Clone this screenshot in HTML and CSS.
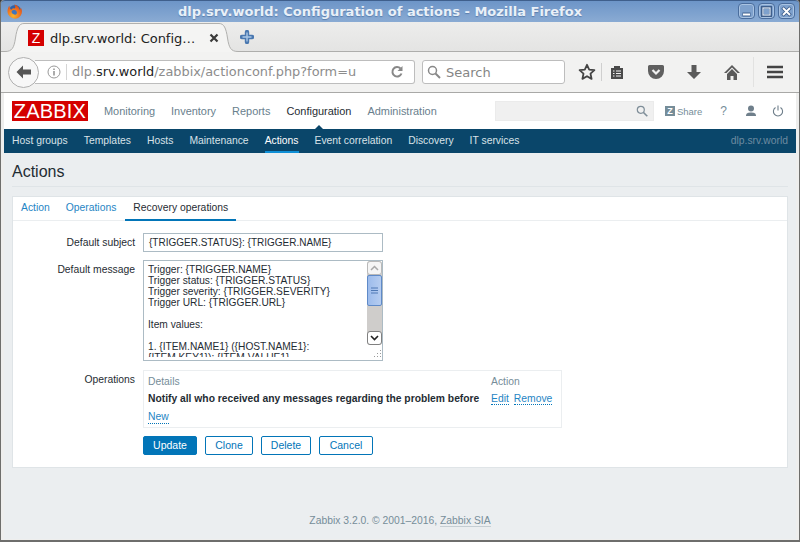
FILE: index.html
```html
<!DOCTYPE html>
<html lang="en">
<head>
    <meta charset="UTF-8">
    <title>dlp.srv.world: Configuration of actions</title>
    <link rel="stylesheet" href="styles.css">
</head>
<body>
<div class="window">
    <div class="titlebar">
        <svg class="ff-logo" width="15" height="15" viewBox="0 0 16 16">
            <defs>
                <radialGradient id="ffOrange" cx="0.4" cy="0.8" r="0.9">
                    <stop offset="0" stop-color="#f7b32b"/>
                    <stop offset="0.6" stop-color="#ec6a1f"/>
                    <stop offset="1" stop-color="#c9401c"/>
                </radialGradient>
            </defs>
            <circle cx="8.500" cy="7.500" r="6.500" fill="#2f62a8"/>
            <path d="M2.500 1.500C1 4 -.5 8 1.500 11.500C4 16 11 17.500 14.500 12.500C16.500 9.500 16.300 6 14.500 3.500C14.700 5 14.200 5.800 13.500 6C12.800 3 10.500 .8 7.500 .5C9 2 9.300 3.500 8.300 4.800C6.500 4.200 5.200 5 4.800 6.200C3.500 5.500 2.700 4 2.500 1.500Z" fill="url(#ffOrange)"/>
            <path d="M5 7.500C6 6 9 6 10.300 8C11.300 9.800 9.800 11.800 7.800 11.300C5.800 10.800 4.500 9.300 5 7.500Z" fill="#3f74bd"/>
        </svg>
        <span class="title-text">dlp.srv.world: Configuration of actions - Mozilla Firefox</span>
        <div class="win-buttons">
            <span class="win-btn"><svg width="13" height="13" viewBox="0 0 13 13"><path d="M2.500 9.500h8" stroke="#3f5f8c" stroke-width="4"/><path d="M3 9.500h7" stroke="#fff" stroke-width="2"/></svg></span>
            <span class="win-btn"><svg width="13" height="13" viewBox="0 0 13 13"><rect x="2.500" y="2.500" width="8" height="8" fill="none" stroke="#3f5f8c" stroke-width="3"/><rect x="3" y="3" width="7" height="7" fill="none" stroke="#dfe9f5" stroke-width="1.200"/></svg></span>
            <span class="win-btn"><svg width="13" height="13" viewBox="0 0 13 13"><path d="M2.500 2.500l8 8M10.500 2.500l-8 8" stroke="#3f5f8c" stroke-width="3.600"/><path d="M3 3l7 7M10 3l-7 7" stroke="#fff" stroke-width="1.800"/></svg></span>
        </div>
    </div>

    <div class="tabstrip">
        <div class="tab">
            <svg class="tab-flare" width="19" height="29" viewBox="0 0 19 29"><path d="M0 28.500C7 28.500 9 25 10.500 15C12 5 14 .5 19 .5V29H0Z" fill="#f4f4f3"/><path d="M0 28.500C7 28.500 9 25 10.500 15C12 5 14 .5 19 .5" fill="none" stroke="#b0b0ae"/></svg>
            <div class="tab-body">
                <span class="favicon">Z</span>
                <span class="tab-title">dlp.srv.world: Config…</span>
                <svg class="tab-close" width="10" height="10" viewBox="0 0 10 10"><path d="M1.500 1.500l7 7M8.500 1.500l-7 7" stroke="#3a3a3a" stroke-width="2.200"/></svg>
            </div>
            <svg class="tab-flare" width="19" height="29" viewBox="0 0 19 29"><path d="M19 28.500C12 28.500 10 25 8.500 15C7 5 5 .5 0 .5V29H19Z" fill="#f4f4f3"/><path d="M19 28.500C12 28.500 10 25 8.500 15C7 5 5 .5 0 .5" fill="none" stroke="#b0b0ae"/></svg>
        </div>
        <svg class="new-tab" width="14" height="14" viewBox="0 0 14 14"><path d="M7 2v10M2 7h10" stroke="#4a78b0" stroke-width="4.400" stroke-linecap="round"/><path d="M7 2.500v9M2.500 7h9" stroke="#a9c6e6" stroke-width="1.400"/></svg>
    </div>

    <div class="toolbar">
        <div class="urlgroup">
            <span class="back-btn"><svg width="18" height="16" viewBox="0 0 18 16"><path d="M1.500 8L8 1.500V5.500h8v5H8v4z" fill="#555"/></svg></span>
            <div class="urlbar">
                <svg class="info-icon" width="14" height="14" viewBox="0 0 14 14"><circle cx="7" cy="7" r="6" fill="none" stroke="#999" stroke-width="1"/><path d="M7 3.500v1.500M7 6v4.500" stroke="#888" stroke-width="1.400"/></svg>
                <span class="url-text">dlp.<b>srv.world</b>/zabbix/actionconf.php?form=u</span>
                <svg class="reload" width="14" height="14" viewBox="0 0 14 14"><path d="M11.500 8.500A4.700 4.700 0 1 1 10.500 3.500" fill="none" stroke="#888" stroke-width="2"/><path d="M12.500 1v5h-5z" fill="#888"/></svg>
            </div>
        </div>
        <div class="searchbar">
            <svg width="14" height="14" viewBox="0 0 14 14"><circle cx="5.500" cy="5.500" r="4" fill="none" stroke="#888" stroke-width="1.500"/><path d="M8.500 8.500l4.500 4.500" stroke="#888" stroke-width="2"/></svg>
            <span>Search</span>
        </div>
        <div class="tool-icons">
            <svg class="ti-star" width="18" height="18" viewBox="0 0 18 18"><path d="M9 1.800l2.200 4.800 5.200.6-3.900 3.500 1.100 5.200L9 13.200l-4.600 2.700 1.100-5.200-3.900-3.500 5.200-.6z" fill="none" stroke="#444" stroke-width="1.800" stroke-linejoin="round"/></svg>
            <span class="tool-sep"></span>
            <svg class="ti-clip" width="14" height="14" viewBox="0 0 14 14"><path d="M1 3h3V1h6v2h3v11H1z" fill="#4a4a4a"/><path d="M3 6h1.500M3 8.500h1.500M3 11h1.500M6 6h5M6 8.500h5M6 11h5" stroke="#f1f1f1" stroke-width="1"/></svg>
            <svg class="ti-pocket" width="16" height="14" viewBox="0 0 16 14"><path d="M1.500 0h13A1.500 1.500 0 0 1 16 1.500V6a8 8 0 0 1-16 0V1.500A1.500 1.500 0 0 1 1.500 0z" fill="#606060"/><path d="M4.500 5L8 8.500 11.500 5" fill="none" stroke="#f1f1f1" stroke-width="2.200"/></svg>
            <svg class="ti-down" width="14" height="14" viewBox="0 0 14 14"><path d="M4.500 0h5v7H14l-7 7-7-7h4.500z" fill="#5a5a5a"/></svg>
            <svg class="ti-home" width="16" height="15" viewBox="0 0 16 15"><path d="M8 0L0 8h2.500L8 2.500 13.500 8H16z" fill="#5a5a5a"/><path d="M8 4L3 9v6h3.500v-4h3v4H13V9z" fill="#5a5a5a"/></svg>
            <span class="tool-sep tool-sep-faint"></span>
            <svg class="ti-menu" width="16" height="14" viewBox="0 0 16 14"><path d="M0 2h16M0 7h16M0 12h16" stroke="#444" stroke-width="2.400"/></svg>
        </div>
    </div>

    <div class="page">
        <header class="topnav">
            <div class="logo">ZABBIX</div>
            <nav class="mainmenu">
                <a>Monitoring</a>
                <a>Inventory</a>
                <a>Reports</a>
                <a class="selected">Configuration</a>
                <a>Administration</a>
            </nav>
            <div class="topright">
                <div class="globalsearch">
                    <svg width="12" height="12" viewBox="0 0 12 12"><circle cx="4.800" cy="4.800" r="3.500" fill="none" stroke="#7e8d98" stroke-width="1.200"/><path d="M7.500 7.500l3.800 3.800" stroke="#7e8d98" stroke-width="1.600"/></svg>
                </div>
                <span class="share"><span class="share-z">Z</span>Share</span>
                <span class="help">?</span>
                <svg class="user-icon" width="12" height="12" viewBox="0 0 12 12"><circle cx="6" cy="3.500" r="3" fill="#6f7f8b"/><path d="M1 11c0-3 2-3.500 5-3.500s5 .5 5 3.500z" fill="#6f7f8b"/></svg>
                <svg class="power-icon" width="12" height="12" viewBox="0 0 12 12"><path d="M3.500 2.500a4.600 4.600 0 1 0 5 0" fill="none" stroke="#6f7f8b" stroke-width="1.100"/><path d="M6 .5v5" stroke="#6f7f8b" stroke-width="1.100"/></svg>
            </div>
        </header>

        <nav class="submenu">
            <a>Host groups</a>
            <a>Templates</a>
            <a>Hosts</a>
            <a>Maintenance</a>
            <a class="selected">Actions</a>
            <a>Event correlation</a>
            <a>Discovery</a>
            <a>IT services</a>
            <span class="server-name">dlp.srv.world</span>
        </nav>

        <main class="content">
            <h1 class="page-title">Actions</h1>
            <section class="card">
                <ul class="tabs">
                    <li>Action</li>
                    <li>Operations</li>
                    <li class="active">Recovery operations</li>
                </ul>
                <div class="form-body">
                    <div class="form-row">
                        <label>Default subject</label>
                        <div class="subject">{TRIGGER.STATUS}: {TRIGGER.NAME}</div>
                    </div>
                    <div class="form-row form-row-tall">
                        <label>Default message</label>
                        <div class="message">
                            <div class="message-text">Trigger: {TRIGGER.NAME}<br>Trigger status: {TRIGGER.STATUS}<br>Trigger severity: {TRIGGER.SEVERITY}<br>Trigger URL: {TRIGGER.URL}<br><br>Item values:<br><br>1. {ITEM.NAME1} ({HOST.NAME1}:<br>{ITEM.KEY1}): {ITEM.VALUE1}</div>
                            <div class="scrollbar">
                                <span class="sb-btn"><svg width="9" height="6" viewBox="0 0 9 6"><path d="M1 5l3.500-3.500L8 5" fill="none" stroke="#a8a8a8" stroke-width="1.500"/></svg></span>
                                <span class="sb-thumb"><svg width="7" height="7" viewBox="0 0 7 7"><path d="M0 1h7M0 3.500h7M0 6h7" stroke="#4f79b5"/></svg></span>
                                <span class="sb-track"></span>
                                <span class="sb-btn sb-btn-down"><svg width="9" height="6" viewBox="0 0 9 6"><path d="M1 1l3.500 3.500L8 1" fill="none" stroke="#222" stroke-width="1.600"/></svg></span>
                            </div>
                            <svg class="grip" width="12" height="12" viewBox="0 0 12 12"><path d="M10 2h1v1h-1zM7 5h1v1H7zM10 5h1v1h-1zM4 8h1v1H4zM7 8h1v1H7zM10 8h1v1h-1z" fill="#9a9a9a"/></svg>
                        </div>
                    </div>
                    <div class="form-row">
                        <label>Operations</label>
                        <div class="ops">
                            <div class="ops-head"><span>Details</span><span class="ops-action">Action</span></div>
                            <div class="ops-line">
                                <strong>Notify all who received any messages regarding the problem before</strong>
                                <span class="ops-action"><a class="dotted">Edit</a><a class="dotted">Remove</a></span>
                            </div>
                            <a class="dotted ops-new">New</a>
                        </div>
                    </div>
                    <div class="form-buttons">
                        <button class="btn btn-update primary">Update</button>
                        <button class="btn btn-clone">Clone</button>
                        <button class="btn btn-delete">Delete</button>
                        <button class="btn btn-update">Cancel</button>
                    </div>
                </div>
            </section>
            <footer class="footer">Zabbix 3.2.0. © 2001–2016, <span class="footer-link">Zabbix SIA</span></footer>
        </main>
    </div>
</div>
</body>
</html>
```

FILE: styles.css
```css
html, body {
    margin: 0;
    padding: 0;
    height: 100%;
    overflow: hidden;
    background: #3a3a3a;
}

.window {
    height: 542px;
    box-sizing: border-box;
    display: flex;
    flex-direction: column;
    background: #eeeeed;
    border-left: 1px solid #6e6e6c;
    border-right: 1px solid #6e6e6c;
    border-bottom: 2px solid #6e6e6c;
    border-radius: 4px 4px 0 0;
    font-family: "DejaVu Sans", sans-serif;
}

/* window title */
.titlebar {
    height: 22px;
    flex: none;
    display: flex;
    align-items: center;
    justify-content: center;
    padding-right: 40px;
    position: relative;
    background: linear-gradient(#6d95c8, #8aabd3);
    border-top: 1px solid #3f5f8c;
    border-radius: 4px 4px 0 0;
    box-sizing: border-box;
}

.ff-logo {
    position: absolute;
    left: 6px;
    top: 3px;
}

.title-text {
    color: #e9f0f8;
    font-size: 13px;
    font-weight: bold;
    text-shadow: 0 1px 1px #5a7ead;
}

.win-buttons {
    position: absolute;
    right: 4px;
    top: 2px;
    display: flex;
    gap: 3px;
}

.win-btn {
    width: 17px;
    height: 16px;
    border: 1px solid #4a6d9d;
    border-radius: 4px;
    box-sizing: border-box;
    display: flex;
    align-items: center;
    justify-content: center;
    background: #7ea1cd;
    box-shadow: inset 0 0 0 1px #a9c3e2;
}

.win-btn svg {
    flex: none;
}

/* tabs */
.tabstrip {
    height: 30px;
    flex: none;
    display: flex;
    align-items: flex-end;
    padding-left: 4px;
    box-sizing: border-box;
    background: linear-gradient(#ededec, #e4e4e3);
    border-bottom: 1px solid #aeaeac;
}

.tab {
    display: flex;
    height: 29px;
    margin-bottom: -1px;
    position: relative;
}

.tab-flare {
    flex: none;
    display: block;
}

.tab-body {
    width: 195px;
    box-sizing: border-box;
    display: flex;
    align-items: center;
    padding-left: 4px;
    background: #f4f4f3;
    border-top: 1px solid #b0b0ae;
}

.favicon {
    width: 16px;
    height: 16px;
    flex: none;
    background: #d40000;
    color: #fff;
    font: 14px/16px "Liberation Sans", sans-serif;
    text-align: center;
}

.tab-title {
    margin-left: 6px;
    font-size: 13px;
    letter-spacing: -0.05px;
    color: #222;
    white-space: nowrap;
}

.tab-close {
    margin-left: 14px;
    flex: none;
}

.new-tab {
    margin: 0 0 7px 2px;
    flex: none;
}

/* nav toolbar */
.toolbar {
    height: 41px;
    flex: none;
    box-sizing: border-box;
    display: flex;
    align-items: center;
    padding: 0 7px;
    background: #f2f2f1;
    border-bottom: 1px solid #a9a9a7;
}

.urlgroup {
    display: flex;
    align-items: center;
    flex: none;
}

.back-btn {
    width: 31px;
    height: 31px;
    flex: none;
    box-sizing: border-box;
    border: 1px solid #b0b0b0;
    border-radius: 50%;
    background: #f7f7f7;
    display: flex;
    align-items: center;
    justify-content: center;
    position: relative;
    z-index: 1;
}

.urlbar {
    width: 380px;
    height: 24px;
    margin-left: -4px;
    box-sizing: border-box;
    display: flex;
    align-items: center;
    padding-left: 12px;
    background: #fff;
    border: 1px solid #bdbdbd;
    border-left: none;
    border-radius: 0 3px 3px 0;
}

.info-icon {
    flex: none;
}

.url-text {
    margin-left: 5px;
    padding-left: 5px;
    border-left: 1px solid #d5d5d5;
    font-size: 12.9px;
    line-height: 16px;
    color: #8c8c8c;
    width: 309px;
    white-space: nowrap;
}

.url-text b {
    color: #222;
    font-weight: normal;
}

.reload {
    flex: none;
    margin-left: 9px;
}

.searchbar {
    width: 143px;
    height: 24px;
    margin-left: 7px;
    flex: none;
    box-sizing: border-box;
    display: flex;
    align-items: center;
    gap: 5px;
    padding-left: 4px;
    background: #fff;
    border: 1px solid #bdbdbd;
    border-radius: 3px;
    font-size: 13px;
    color: #858585;
}

.tool-icons {
    display: flex;
    align-items: center;
    height: 30px;
}

.ti-star { margin-left: 13px; }
.tool-sep { width: 1px; height: 18px; background: #cfcfcf; margin-left: 5px; }
.ti-clip { margin-left: 8px; }
.ti-pocket { margin-left: 24px; }
.ti-down { margin-left: 23px; }
.ti-home { margin-left: 23px; }
.tool-sep-faint { height: 30px; background: #e2e2e1; margin-left: 13px; }
.ti-menu { margin-left: 13px; }

/* zabbix page */
.page {
    flex: 1;
    margin: 0 3px 1px;
    display: flex;
    flex-direction: column;
    min-height: 0;
    font-family: "Liberation Sans", sans-serif;
    font-size: 10.35px;
    background: #ebeef0;
}

.topnav {
    height: 36px;
    flex: none;
    display: flex;
    align-items: center;
    background: #fff;
    box-sizing: border-box;
    padding-left: 8px;
}

.logo {
    width: 76px;
    height: 20px;
    flex: none;
    background: #d40000;
    color: #fff;
    font-size: 20px;
    line-height: 20px;
    text-align: center;
    letter-spacing: 0.2px;
}

.mainmenu {
    display: flex;
    align-items: center;
    gap: 16px;
    margin-left: 16px;
    font-size: 10.95px;
    color: #69808d;
}

.mainmenu .selected {
    color: #1f2c33;
    position: relative;
}

/* the little notch under the active menu */
.mainmenu .selected::after {
    content: "";
    position: absolute;
    left: 50%;
    bottom: -13px;
    margin-left: -5px;
    border: 5px solid transparent;
    border-top: none;
    border-bottom-color: #0a466a;
}

.topright {
    margin-left: auto;
    display: flex;
    align-items: center;
    padding-right: 12px;
}

.globalsearch {
    width: 159px;
    height: 20px;
    box-sizing: border-box;
    background: #f0f0f0;
    border: 1px solid #ebebeb;
    display: flex;
    align-items: center;
    justify-content: flex-end;
    padding-right: 5px;
}

.share {
    margin-left: 11px;
    display: flex;
    align-items: center;
    gap: 2px;
    font-size: 9.5px;
    color: #768d99;
}

.share-z {
    width: 10px;
    height: 10px;
    background: #768d99;
    color: #fff;
    font-size: 9px;
    line-height: 10px;
    font-weight: bold;
    text-align: center;
}

.help {
    margin-left: 18px;
    font-size: 12px;
    color: #768d99;
}

.user-icon { margin-left: 18px; }
.power-icon { margin-left: 15px; }

.submenu {
    height: 24px;
    flex: none;
    display: flex;
    align-items: stretch;
    gap: 16px;
    padding: 0 8px;
    background: #0a466a;
    color: #d9e2e8;
    line-height: 23px;
    box-sizing: border-box;
}

.submenu .selected {
    color: #fff;
    border-bottom: 2px solid #0f8fd6;
    height: 22px;
    margin-top: 0;
}

.server-name {
    margin-left: auto;
    color: #6d8ba0;
}

.content {
    flex: 1;
    min-height: 0;
    display: flex;
    flex-direction: column;
    padding: 0 8px;
}

.page-title {
    margin: 0;
    height: 33px;
    font-size: 16px;
    font-weight: normal;
    line-height: 37px;
    color: #1f2c33;
    border-bottom: 1px solid #dfe4e7;
}

.card {
    margin-top: 9px;
    height: 272px;
    flex: none;
    box-sizing: border-box;
    background: #fff;
    border: 1px solid #dfe4e7;
}

.tabs {
    margin: 0;
    padding: 0;
    list-style: none;
    height: 24px;
    box-sizing: border-box;
    display: flex;
    border-bottom: 1px solid #ebeef0;
    color: #1f85c4;
    line-height: 21px;
}

.tabs li {
    padding: 0 8px;
    height: 24px;
    box-sizing: border-box;
}

.tabs .active {
    margin-left: 1px;
    color: #1f2c33;
    border-bottom: 2px solid #0275b8;
}

.form-body {
    padding-top: 12px;
}

.form-row {
    display: flex;
    align-items: flex-start;
    margin-bottom: 8px;
}

.form-row-tall {
    margin-bottom: 9px;
}

.form-row label {
    width: 122px;
    height: 19px;
    flex: none;
    text-align: right;
    margin-right: 8px;
    line-height: 20px;
    color: #1f2c33;
}

.subject {
    width: 240px;
    height: 19px;
    box-sizing: border-box;
    border: 1px solid #acbbc4;
    padding-left: 5px;
    line-height: 17px;
    font-size: 10px;
    color: #1f2c33;
}

.message {
    width: 240px;
    height: 101px;
    box-sizing: border-box;
    border: 1px solid #acbbc4;
    display: flex;
    position: relative;
    overflow: hidden;
}

.message-text {
    flex: 1;
    padding: 3px 0 0 4px;
    font-size: 10.2px;
    line-height: 11px;
    color: #1f2c33;
    white-space: nowrap;
    height: 93px;
    overflow: hidden;
}

.scrollbar {
    width: 15px;
    height: 84px;
    flex: none;
    display: flex;
    flex-direction: column;
    background: #cfcdcb;
    border-radius: 3px;
}

.sb-btn {
    height: 14px;
    flex: none;
    box-sizing: border-box;
    background: #f5f5f5;
    border: 1px solid #b9b9b9;
    border-radius: 3px;
    display: flex;
    align-items: center;
    justify-content: center;
}

.sb-btn-down {
    background: #fff;
    border-color: #808080;
}

.sb-thumb {
    height: 31px;
    flex: none;
    box-sizing: border-box;
    background: linear-gradient(90deg, #9dbcec, #b6cdf0);
    border: 1px solid #5f8ac8;
    border-radius: 2px;
    display: flex;
    align-items: center;
    justify-content: center;
}

.sb-track {
    flex: 1;
}

.grip {
    position: absolute;
    right: 0;
    bottom: 0;
}

.ops {
    width: 419px;
    height: 58px;
    box-sizing: border-box;
    border: 1px solid #ebeef0;
    padding: 5px 4px;
    color: #1f2c33;
}

.ops-head {
    display: flex;
    color: #768d99;
    height: 12px;
    line-height: 12px;
}

.ops-line {
    display: flex;
    margin-top: 4px;
    height: 13px;
    line-height: 13px;
    white-space: nowrap;
}

.ops-action {
    position: absolute;
    margin-left: 343px;
}

.ops-line strong {
    font-size: 10.3px;
}

.dotted {
    color: #1f85c4;
    border-bottom: 1px dotted #0275b8;
}

.ops-action .dotted + .dotted {
    margin-left: 5px;
}

.ops-new {
    display: inline-block;
    margin-top: 6px;
    line-height: 12px;
}

.form-buttons {
    display: flex;
    gap: 8px;
    padding-left: 130px;
}

.btn {
    height: 19px;
    padding: 0;
    box-sizing: border-box;
    background: #fff;
    border: 1px solid #0275b8;
    border-radius: 2px;
    color: #0275b8;
    font: 10.5px/17px "Liberation Sans", sans-serif;
}

.btn-update { width: 54px; }
.btn-clone { width: 48px; }
.btn-delete { width: 50px; }

.btn.primary {
    background: #0275b8;
    color: #fff;
}

.footer {
    margin-top: auto;
    height: 24px;
    text-align: center;
    color: #768d99;
}

.footer-link {
    border-bottom: 1px solid #c5ced3;
}
```
